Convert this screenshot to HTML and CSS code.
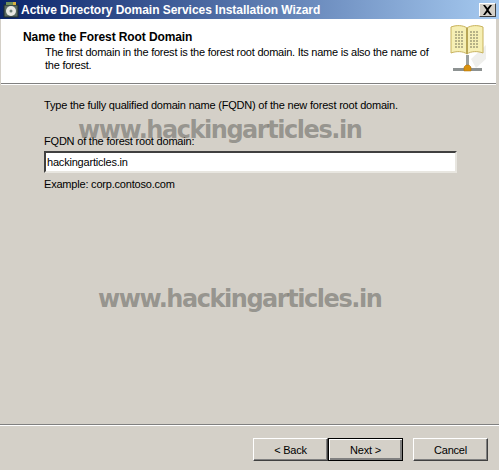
FILE: index.html
```html
<!DOCTYPE html>
<html lang="en">

<head>
    <meta charset="UTF-8">
    <title>Active Directory Domain Services Installation Wizard</title>
    <link rel="stylesheet" href="styles.css">
</head>

<body>
    <div class="window">
        <div class="title-bar">
            <svg class="title-icon" width="16" height="16" viewBox="0 0 16 16">
                <rect x="1" y="3" width="14" height="12" fill="#5c6b62" stroke="#1c2a2a"/>
                <rect x="3" y="0" width="10" height="3" fill="#6f8f5a"/>
                <rect x="10" y="0" width="3" height="3" fill="#d8b040"/>
                <circle cx="8" cy="9" r="5" fill="#e8e8e4"/>
                <circle cx="8" cy="9" r="1.5" fill="#6f7f78"/>
            </svg>
            <span class="title-text">Active Directory Domain Services Installation Wizard</span>
            <button class="close-btn" type="button">
                <svg width="11" height="10" viewBox="0 0 11 10">
                    <path d="M1 0h2l2.500 3 2.500-3h2l-3.500 5 3.500 5h-2l-2.500-3-2.500 3h-2l3.500-5z" fill="#000"/>
                </svg>
            </button>
        </div>

        <div class="header">
            <div class="header-text">
                <h1>Name the Forest Root Domain</h1>
                <p>The first domain in the forest is the forest root domain. Its name is also the name of the forest.</p>
            </div>
            <svg class="header-icon" width="38" height="48" viewBox="0 0 38 48">
                <path d="M22 34l15-14v14l-10 9z" fill="#efefec"/>
                <path d="M18 3C14 0 7 0 2 2v26c5-2 12-2 16 1 4-3 11-3 16-1V2c-5-2-12-2-16 1z" fill="#f6efb4" stroke="#c8b25c"/>
                <path d="M18 3v26" stroke="#b9a654" stroke-width="2"/>
                <path d="M6 7h9M6 10h9M6 13h9M6 16h9M6 19h9M6 22h9M21 7h9M21 10h9M21 13h9M21 16h9M21 19h9M21 22h9" stroke="#77745a" stroke-dasharray="2 1"/>
                <rect x="17" y="30" width="3" height="12" fill="#9aa0a0"/>
                <rect x="4" y="43" width="29" height="3" fill="#8d9292"/>
                <path d="M15 46v-4l2-2h3l2 2v4z" fill="#d9920f" stroke="#a86c08" stroke-width=".5"/>
            </svg>
        </div>

        <div class="content">
            <p class="intro">Type the fully qualified domain name (FQDN) of the new forest root domain.</p>
            <label class="field-label" for="fqdn">FQDN of the forest root domain:</label>
            <input class="field-input" id="fqdn" type="text" value="hackingarticles.in">
            <p class="example">Example: corp.contoso.com</p>
        </div>

        <div class="footer">
            <button class="btn btn-back" type="button">&lt; Back</button>
            <button class="btn btn-default" type="button">Next &gt;</button>
            <button class="btn btn-cancel" type="button">Cancel</button>
        </div>

        <div class="watermark watermark-top">www.hackingarticles.in</div>
        <div class="watermark watermark-mid">www.hackingarticles.in</div>
    </div>
</body>

</html>
```

FILE: styles.css
```css
html,
body {
    margin: 0;
    padding: 0;
}

body {
    font-family: 'Liberation Sans', Arial, sans-serif;
    font-size: 11px;
    letter-spacing: -0.2px;
    color: #000;
    background-color: #d4d0c8;
}

.window {
    position: relative;
    width: 499px;
    height: 470px;
    overflow: hidden;
    display: flex;
    flex-direction: column;
    background-color: #d4d0c8;
}

.title-bar {
    height: 19px;
    display: flex;
    align-items: center;
    padding: 0 3px;
    background: linear-gradient(to right, #0a246a, #a6caf0);
}

.title-icon {
    margin-right: 2px;
    flex-shrink: 0;
}

.title-text {
    flex: 1;
    color: #fff;
    font-weight: bold;
    font-size: 12px;
    letter-spacing: -0.04px;
    white-space: nowrap;
}

.close-btn {
    width: 17px;
    height: 14px;
    padding: 0;
    display: flex;
    align-items: center;
    justify-content: center;
    background-color: #d4d0c8;
    border: 1px solid;
    border-color: #fff #404040 #404040 #fff;
}

.header {
    height: 64px;
    margin: 0 3px 0 1px;
    display: flex;
    justify-content: space-between;
    background-color: #fff;
    border-bottom: 1px solid #808080;
    box-shadow: 0 1px 0 #fff;
}

.header-text {
    padding: 11px 0 0 22px;
    width: 420px;
}

.header-text h1 {
    margin: 0;
    font-size: 12px;
    line-height: 14px;
    font-weight: bold;
    letter-spacing: -0.1px;
}

.header-text p {
    margin: 2px 0 0;
    padding-left: 22px;
    line-height: 13px;
    letter-spacing: -0.24px;
}

.header-icon {
    margin: 6px 9px 0 0;
}

.content {
    flex: 1;
    padding: 14px 42px 0 44px;
}

.intro {
    margin: 0 0 22px;
    line-height: 14px;
}

.field-label {
    display: block;
    line-height: 14px;
    margin-bottom: 3px;
}

.field-input {
    display: block;
    box-sizing: border-box;
    width: 413px;
    height: 22px;
    padding: 1px 1px;
    margin: 0;
    font-family: inherit;
    font-size: 11px;
    letter-spacing: inherit;
    background-color: #fff;
    border: 2px solid;
    border-color: #404040 #e8e6e0 #e8e6e0 #404040;
    outline: none;
}

.example {
    margin: 4px 0 0;
    line-height: 14px;
}

.footer {
    height: 46px;
    display: flex;
    align-items: flex-start;
    padding: 13px 11px 0 253px;
    box-sizing: border-box;
    border-top: 1px solid #808080;
    box-shadow: inset 0 1px 0 #fff;
}

.btn {
    box-sizing: border-box;
    width: 75px;
    height: 23px;
    padding: 0;
    font-family: inherit;
    font-size: 11px;
    letter-spacing: inherit;
    color: #000;
    background-color: #d4d0c8;
    border: 1px solid;
    border-color: #fff #404040 #404040 #fff;
    box-shadow: inset -1px -1px 0 #808080;
}

.btn-default {
    border: 1px solid #000;
    box-shadow: inset 1px 1px 0 #fff, inset -2px -2px 0 #808080;
}

.btn-cancel {
    margin-left: 10px;
}

.watermark {
    position: absolute;
    font-family: 'DejaVu Sans', sans-serif;
    font-weight: bold;
    font-size: 24px;
    letter-spacing: -1.45px;
    line-height: 30px;
    color: rgba(110, 110, 105, 0.62);
    white-space: nowrap;
}

.watermark-top {
    left: 78px;
    top: 115px;
}

.watermark-mid {
    left: 98px;
    top: 284px;
}
```
